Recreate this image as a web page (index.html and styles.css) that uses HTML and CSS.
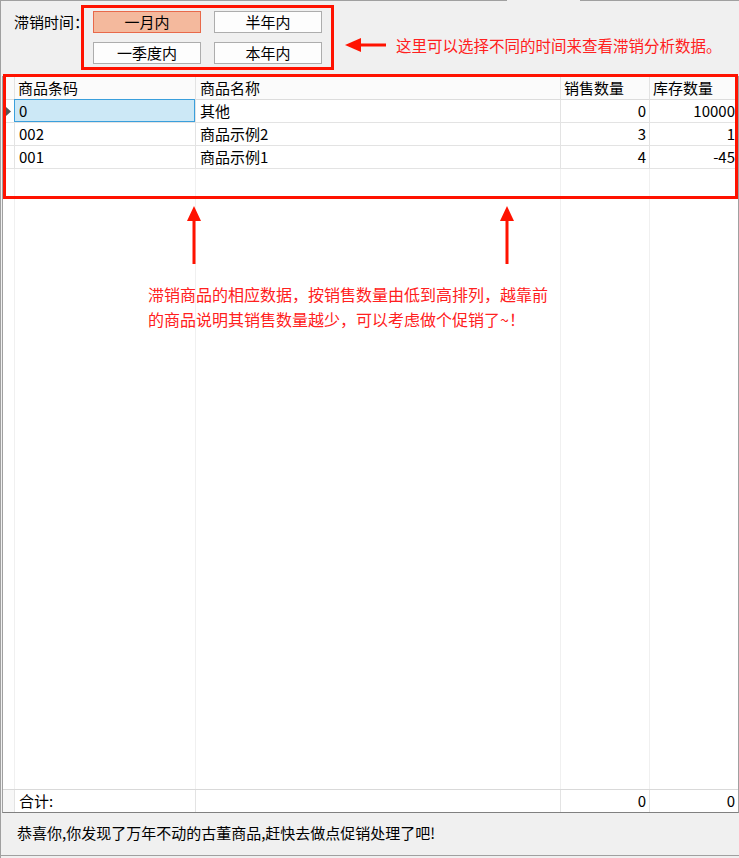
FILE: index.html
```html
<!DOCTYPE html>
<html lang="zh-CN">
<head>
<meta charset="utf-8">
<title>滞销商品分析</title>
<link rel="stylesheet" href="styles.css">
</head>
<body>
<div class="window">
  <div class="tabline"><span class="seg seg-a"></span><span class="seg seg-gap"></span><span class="seg seg-b"></span></div>

  <div class="filter">
    <div class="flabel">滞销时间：</div>
    <div class="rangebox">
      <button class="rbtn active">一月内</button>
      <button class="rbtn">半年内</button>
      <button class="rbtn">一季度内</button>
      <button class="rbtn">本年内</button>
    </div>
    <svg class="larrow" width="41" height="16" viewBox="0 0 41 16">
      <polygon points="0,8 16,1 16,15" fill="#ff1200"/>
      <rect x="15" y="6.5" width="26" height="3" fill="#ff1200"/>
    </svg>
    <span class="note">这里可以选择不同的时间来查看滞销分析数据。</span>
  </div>

  <div class="grid">
    <div class="row head">
      <div class="cell rh"></div>
      <div class="cell">商品条码</div>
      <div class="cell">商品名称</div>
      <div class="cell">销售数量</div>
      <div class="cell">库存数量</div>
    </div>
    <div class="row">
      <div class="cell rh"><svg class="cur" width="5" height="9" viewBox="0 0 5 9"><polygon points="0,0 5,4.5 0,9" fill="#555"/></svg></div>
      <div class="cell sel">0</div>
      <div class="cell">其他</div>
      <div class="cell num">0</div>
      <div class="cell num">10000</div>
    </div>
    <div class="row">
      <div class="cell rh"></div>
      <div class="cell">002</div>
      <div class="cell">商品示例2</div>
      <div class="cell num">3</div>
      <div class="cell num">1</div>
    </div>
    <div class="row">
      <div class="cell rh"></div>
      <div class="cell">001</div>
      <div class="cell">商品示例1</div>
      <div class="cell num">4</div>
      <div class="cell num">-45</div>
    </div>
    <div class="filler">
      <div class="fcol"></div>
      <div class="fcol"></div>
      <div class="fcol"></div>
      <div class="fcol"></div>
      <div class="fcol last"></div>
    </div>
    <div class="row total">
      <div class="cell rh"></div>
      <div class="cell">合计:</div>
      <div class="cell"></div>
      <div class="cell num">0</div>
      <div class="cell num">0</div>
    </div>
  </div>

  <div class="status">恭喜你,你发现了万年不动的古董商品,赶快去做点促销处理了吧!</div>

  <div class="gridmark"></div>
  <svg class="uarrow ua1" width="16" height="58" viewBox="0 0 16 58">
    <polygon points="8,0 1,15 15,15" fill="#ff1200"/>
    <rect x="6.5" y="14" width="3" height="44" fill="#ff1200"/>
  </svg>
  <svg class="uarrow ua2" width="16" height="58" viewBox="0 0 16 58">
    <polygon points="8,0 1,15 15,15" fill="#ff1200"/>
    <rect x="6.5" y="14" width="3" height="44" fill="#ff1200"/>
  </svg>
  <div class="gridnote">滞销商品的相应数据，按销售数量由低到高排列，越靠前<br>的商品说明其销售数量越少，可以考虑做个促销了~！</div>
</div>
</body>
</html>
```

FILE: styles.css
```css
* { box-sizing: border-box; }

html, body {
  margin: 0;
  padding: 0;
  background: #f0f0f0;
}

body {
  font-family: "Noto Sans CJK SC", "Noto Sans", sans-serif;
  font-size: 15px;
  color: #000;
}

.window {
  position: relative;
  width: 739px;
  height: 858px;
  border-left: 1px solid #a0a0a0;
  background: #f0f0f0;
  display: flex;
  flex-direction: column;
}

.tabline {
  display: flex;
  height: 1px;
  flex: none;
}
.seg { display: block; height: 1px; }
.seg-a { width: 506px; background: #a0a0a0; }
.seg-gap { width: 73px; }
.seg-b { flex: 1; background: #a0a0a0; }

.filter {
  display: flex;
  align-items: flex-start;
  padding: 4px 0 0 13px;
  height: 75px;
  flex: none;
}

.flabel {
  width: 67px;
  margin-top: 6px;
  line-height: 22px;
  white-space: nowrap;
}

.rangebox {
  width: 253px;
  height: 65px;
  border: 3px solid #ff1200;
  padding: 3px 9px;
  display: grid;
  grid-template-columns: 108px 108px;
  grid-template-rows: 22px 22px;
  column-gap: 13px;
  row-gap: 9px;
}

.rbtn {
  font-family: inherit;
  font-size: 15px;
  line-height: 20px;
  padding: 0;
  margin: 0;
  height: 22px;
  border: 1px solid #adadad;
  background: #fdfdfd;
  color: #000;
}
.rbtn.active {
  background: #f4b99d;
  border-color: #e8694a;
}

.larrow {
  margin: 32px 0 0 11px;
  flex: none;
}

.note {
  margin: 26px 0 0 10px;
  line-height: 28px;
  font-size: 15.5px;
  color: #ff2020;
  white-space: nowrap;
}

.grid {
  margin-left: 1px;
  width: 737px;
  height: 737px;
  border: 1px solid #a0a0a0;
  border-bottom-color: #808080;
  background: #fff;
  display: flex;
  flex-direction: column;
  flex: none;
}

.row {
  display: grid;
  grid-template-columns: 12px 181px 365px 89px 88px;
  height: 23px;
  flex: none;
}

.cell {
  position: relative;
  border-right: 1px solid #e3e3e3;
  border-bottom: 1px solid #e3e3e3;
  line-height: 22px;
  padding: 0 3px 0 4px;
  white-space: nowrap;
  overflow: visible;
}
.row .cell:last-child { border-right: none; }

.head .cell {
  background: #fbfbfb;
  padding-left: 3px;
  border-bottom-color: #dcdcdc;
}
.head .cell:nth-child(3) { padding-left: 4px; }

.cell.rh {
  padding: 0;
  display: flex;
  align-items: center;
  justify-content: center;
}
.cur { margin-left: -1px; }

.cell.num { text-align: right; }

.cell.sel { background: #cce8f6; }
.cell.sel::after {
  content: "";
  position: absolute;
  left: -1px;
  top: -1px;
  right: 0;
  bottom: 0;
  border: 1px solid #3a9fdc;
}

.filler {
  flex: 1;
  display: grid;
  grid-template-columns: 12px 181px 365px 89px 88px;
}
.fcol { border-right: 1px solid #f0f0f0; }
.fcol.last { border-right: none; }

.row.total {
  border-top: 1px solid #d9d9d9;
  height: 23px;
}
.total .cell { border-bottom: none; }
.total .cell.rh { background: #f7f7f7; }

.status {
  height: 43px;
  padding: 10px 0 0 16px;
  line-height: 20px;
  border-bottom: 1px solid #a0a0a0;
  white-space: nowrap;
  flex: none;
}

.gridmark {
  position: absolute;
  left: 2px;
  top: 74px;
  width: 735px;
  height: 125px;
  border: 3px solid #ff1200;
}

.uarrow { position: absolute; top: 206px; }
.ua1 { left: 185px; }
.ua2 { left: 498px; }

.gridnote {
  position: absolute;
  left: 147px;
  top: 282px;
  font-size: 16px;
  line-height: 25px;
  color: #ff2020;
  white-space: nowrap;
}
```
